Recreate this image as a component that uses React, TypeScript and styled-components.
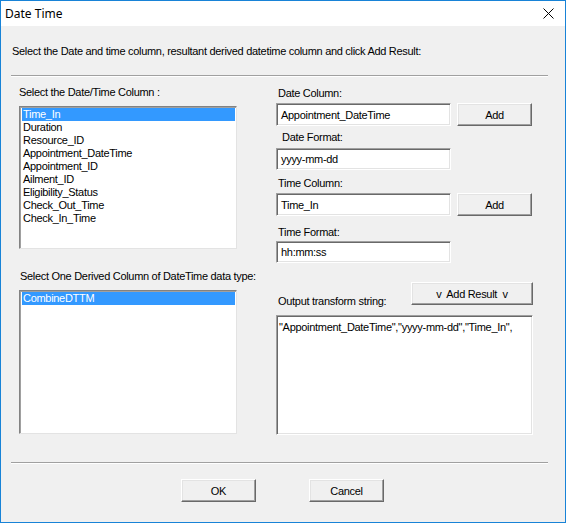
import React from "react";
import styled, { createGlobalStyle } from "styled-components";

const GlobalStyle = createGlobalStyle`
  html, body {
    margin: 0;
    padding: 0;
    background: #f0f0f0;
  }
  * {
    box-sizing: border-box;
  }
`;

const Window = styled.div`
  width: 566px;
  height: 523px;
  border: 1px solid #1883d7;
  background: #f0f0f0;
  display: flex;
  flex-direction: column;
  font-family: "Liberation Sans", Arial, sans-serif;
  font-size: 11px;
  letter-spacing: -0.3px;
  color: #000;
  overflow: hidden;
`;

const TitleBar = styled.div`
  height: 25px;
  background: #fff;
  display: flex;
  align-items: center;
  justify-content: space-between;
  padding: 0 11px 0 4px;
  flex-shrink: 0;
  letter-spacing: 0;
`;

const Title = styled.span`
  font-family: "Noto Sans", "Open Sans", sans-serif;
  font-size: 12px;
`;

const CloseIcon = styled.svg`
  width: 11px;
  height: 11px;
  display: block;
`;

const Body = styled.div`
  flex: 1;
  display: flex;
  flex-direction: column;
  padding: 0 17px 0 10px;
`;

const Instruction = styled.div`
  margin-top: 19px;
  height: 13px;
  line-height: 13px;
  padding-left: 1px;
`;

const Separator = styled.div<{ top: number }>`
  height: 1px;
  background: #a0a0a0;
  border-bottom: 1px solid #fff;
  box-sizing: content-box;
  margin-top: ${(p) => p.top}px;
`;

const Main = styled.div`
  display: grid;
  grid-template-columns: 218px 257px;
  column-gap: 39px;
  padding-left: 8px;
`;

const Column = styled.div`
  display: flex;
  flex-direction: column;
`;

const Label = styled.div<{ top: number; indent?: number }>`
  margin-top: ${(p) => p.top}px;
  padding-left: ${(p) => p.indent ?? 0}px;
  height: 13px;
  line-height: 13px;
  white-space: nowrap;
`;

const ListBox = styled.div<{ top: number; h: number }>`
  margin-top: ${(p) => p.top}px;
  height: ${(p) => p.h}px;
  background: #fff;
  border-top: 1px solid #828282;
  border-left: 1px solid #828282;
  border-right: 1px solid #e3e3e3;
  border-bottom: 1px solid #e3e3e3;
  box-shadow: inset 1px 1px 0 #a0a0a0;
  padding: 1px 1px 0 2px;
`;

const ListItem = styled.div<{ selected?: boolean }>`
  height: 13px;
  line-height: 13px;
  padding-left: 1px;
  white-space: nowrap;
  background: ${(p) => (p.selected ? "#3399ff" : "transparent")};
  color: ${(p) => (p.selected ? "#fff" : "#000")};
`;

const FieldRow = styled.div<{ top: number }>`
  margin-top: ${(p) => p.top}px;
  display: flex;
  align-items: flex-start;
  gap: 6px;
`;

const TextBox = styled.div<{ h: number }>`
  width: 175px;
  height: ${(p) => p.h}px;
  background: #fff;
  border-top: 1px solid #a0a0a0;
  border-left: 1px solid #a0a0a0;
  border-right: 1px solid #fff;
  border-bottom: 1px solid #fff;
  box-shadow: inset 1px 1px 0 #696969, inset -1px -1px 0 #e3e3e3;
  padding: 0 4px;
  display: flex;
  align-items: center;
  white-space: nowrap;
`;

const Button = styled.button<{ w: number }>`
  width: ${(p) => p.w}px;
  height: 23px;
  background: #f0f0f0;
  border: none;
  border-top: 1px solid #fff;
  border-left: 1px solid #fff;
  border-right: 1px solid #696969;
  border-bottom: 1px solid #696969;
  box-shadow: inset -1px -1px 0 #a0a0a0, inset 1px 1px 0 #e3e3e3;
  font-family: "Liberation Sans", Arial, sans-serif;
  font-size: 11px;
  letter-spacing: -0.3px;
  color: #000;
  padding: 0;
  cursor: pointer;
  white-space: pre;
`;

const OutputHead = styled.div`
  margin-top: 19px;
  display: flex;
  justify-content: space-between;
  align-items: flex-start;
  padding-left: 2px;
`;

const OutputLabel = styled.div`
  margin-top: 13px;
  height: 13px;
  line-height: 13px;
`;

const OutputBox = styled.div`
  margin-top: 7px;
  width: 257px;
  height: 120px;
  background: #fff;
  border-top: 1px solid #a0a0a0;
  border-left: 1px solid #a0a0a0;
  border-right: 1px solid #fff;
  border-bottom: 1px solid #fff;
  box-shadow: inset 1px 1px 0 #696969, inset -1px -1px 0 #e3e3e3;
  padding: 5px 2px;
  white-space: nowrap;
  overflow: hidden;
`;

const Footer = styled.div`
  margin-top: 15px;
  display: flex;
  justify-content: center;
  gap: 53px;
  padding-left: 6px;
`;

const columns = [
  "Time_In",
  "Duration",
  "Resource_ID",
  "Appointment_DateTime",
  "Appointment_ID",
  "Ailment_ID",
  "Eligibility_Status",
  "Check_Out_Time",
  "Check_In_Time",
];

export default function App() {
  return (
    <>
      <GlobalStyle />
      <Window>
        <TitleBar>
          <Title>Date Time</Title>
          <CloseIcon viewBox="0 0 11 11">
            <path d="M0.5 0.5 L10.5 10.5 M10.5 0.5 L0.5 10.5" stroke="#000" strokeWidth="1" fill="none" />
          </CloseIcon>
        </TitleBar>
        <Body>
          <Instruction>
            Select the Date and time column, resultant derived datetime column and click Add Result:
          </Instruction>
          <Separator top={17} />
          <Main>
            <Column>
              <Label top={9}>Select the Date/Time Column :</Label>
              <ListBox top={7} h={143}>
                {columns.map((c, i) => (
                  <ListItem key={c} selected={i === 0}>
                    {c}
                  </ListItem>
                ))}
              </ListBox>
              <Label top={21} indent={1}>Select One Derived Column of DateTime data type:</Label>
              <ListBox top={7} h={144}>
                <ListItem selected>CombineDTTM</ListItem>
              </ListBox>
            </Column>
            <Column>
              <Label top={10} indent={2}>Date Column:</Label>
              <FieldRow top={3}>
                <TextBox h={23}>Appointment_DateTime</TextBox>
                <Button w={75}>Add</Button>
              </FieldRow>
              <Label top={5} indent={6}>Date Format:</Label>
              <FieldRow top={4}>
                <TextBox h={22}>yyyy-mm-dd</TextBox>
              </FieldRow>
              <Label top={7} indent={2}>Time Column:</Label>
              <FieldRow top={3}>
                <TextBox h={23}>Time_In</TextBox>
                <Button w={75}>Add</Button>
              </FieldRow>
              <Label top={10} indent={2}>Time Format:</Label>
              <FieldRow top={2}>
                <TextBox h={22}>hh:mm:ss</TextBox>
              </FieldRow>
              <OutputHead>
                <OutputLabel>Output transform string:</OutputLabel>
                <Button w={122}>v  Add Result  v</Button>
              </OutputHead>
              <OutputBox>"Appointment_DateTime","yyyy-mm-dd","Time_In",</OutputBox>
            </Column>
          </Main>
          <Separator top={27} />
          <Footer>
            <Button w={75}>OK</Button>
            <Button w={75}>Cancel</Button>
          </Footer>
        </Body>
      </Window>
    </>
  );
}
